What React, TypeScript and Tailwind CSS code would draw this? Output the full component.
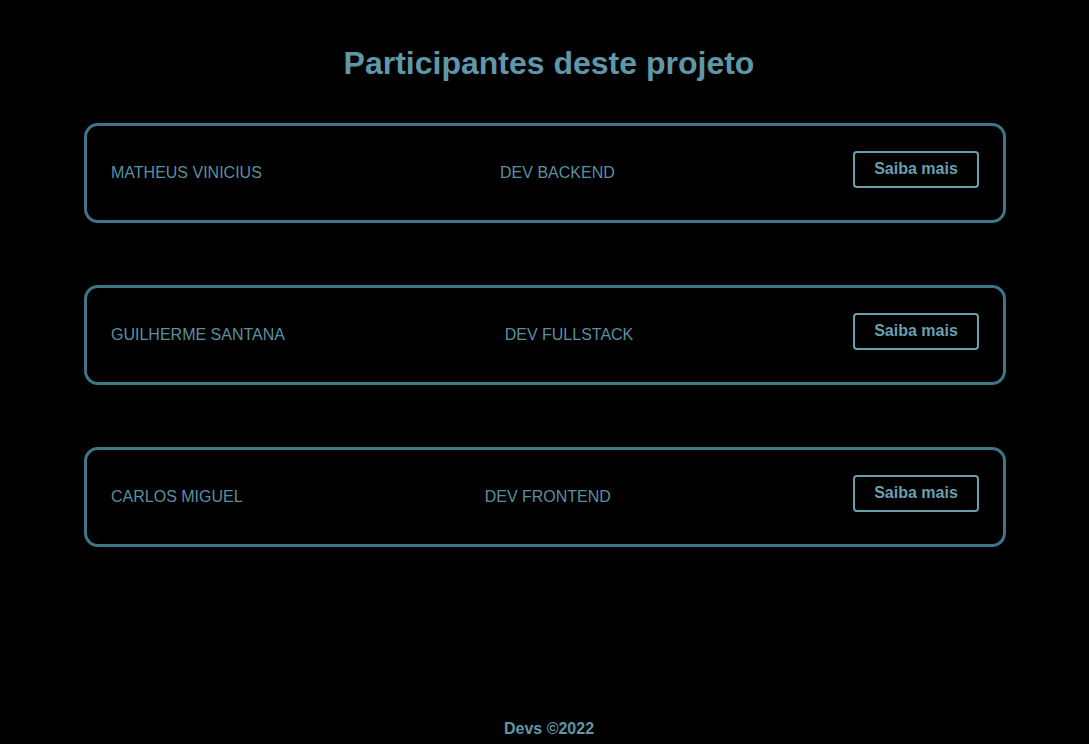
const devs = [
  { name: 'MATHEUS VINICIUS', role: 'DEV BACKEND' },
  { name: 'GUILHERME SANTANA', role: 'DEV FULLSTACK' },
  { name: 'CARLOS MIGUEL', role: 'DEV FRONTEND' },
];

function DevCard({ name, role }: { name: string; role: string }) {
  return (
    <div className="flex h-[100px] items-center justify-between rounded-[14px] border-[3px] border-[#3f7589] px-[24px]">
      <span className="text-[16px] text-[#5a8fa1]">{name}</span>
      <span className="text-[16px] text-[#5a8fa1]">{role}</span>
      <button className="mb-2 h-[37px] w-[126px] rounded-[4px] border-2 border-[#6a9fb0] text-[16px] font-bold text-[#6a9fb0]">
        Saiba mais
      </button>
    </div>
  );
}

export default function App() {
  return (
    <div
      className="flex min-h-screen flex-col bg-black"
      style={{ fontFamily: '"Liberation Sans", Arial, sans-serif' }}
    >
      <h1 className="pl-[9px] pt-[39px] text-center text-[32px] font-bold text-[#6097a8]">
        Participantes deste projeto
      </h1>
      <main className="mt-[36px] flex flex-col gap-[62px] pl-[84px] pr-[83px]">
        {devs.map((d) => (
          <DevCard key={d.name} name={d.name} role={d.role} />
        ))}
      </main>
      <footer className="mt-auto pb-[3px] pl-[9px] text-center text-[16px] font-bold text-[#6097a8]">
        Devs ©2022
      </footer>
    </div>
  );
}
